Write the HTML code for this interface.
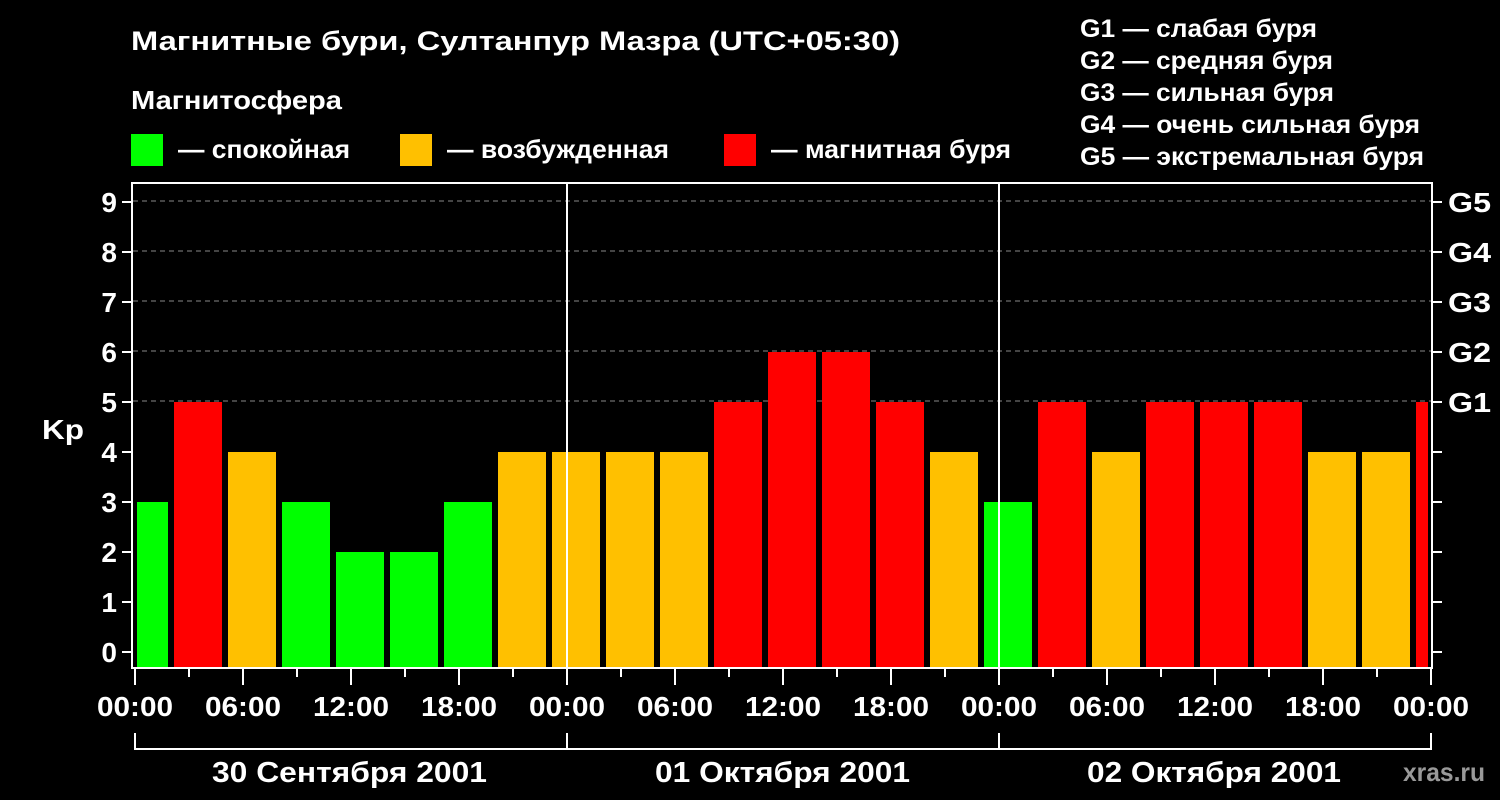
<!DOCTYPE html><html><head><meta charset="utf-8"><style>body{margin:0;background:#000;}svg{display:block}text{font-family:"Liberation Sans",Arial,sans-serif;font-weight:bold;fill:#fff}</style></head><body>
<svg width="1500" height="800" xmlns="http://www.w3.org/2000/svg">
<rect width="1500" height="800" fill="#000"/>
<text x="131" y="50" font-size="27" textLength="769" lengthAdjust="spacingAndGlyphs">Магнитные бури, Султанпур Мазра (UTC+05:30)</text>
<text x="131" y="109" font-size="26" textLength="211" lengthAdjust="spacingAndGlyphs">Магнитосфера</text>
<rect x="131" y="134" width="32" height="32" fill="#00ff00"/><text x="178" y="158" font-size="26" textLength="172" lengthAdjust="spacingAndGlyphs">— спокойная</text>
<rect x="400" y="134" width="32" height="32" fill="#ffc000"/><text x="447" y="158" font-size="26" textLength="222" lengthAdjust="spacingAndGlyphs">— возбужденная</text>
<rect x="724" y="134" width="32" height="32" fill="#ff0000"/><text x="771" y="158" font-size="26" textLength="240" lengthAdjust="spacingAndGlyphs">— магнитная буря</text>
<g font-size="25" lengthAdjust="spacingAndGlyphs"><text x="1080" y="37" textLength="237" lengthAdjust="spacingAndGlyphs">G1 — слабая буря</text><text x="1080" y="69" textLength="253" lengthAdjust="spacingAndGlyphs">G2 — средняя буря</text><text x="1080" y="101" textLength="254" lengthAdjust="spacingAndGlyphs">G3 — сильная буря</text><text x="1080" y="133" textLength="340" lengthAdjust="spacingAndGlyphs">G4 — очень сильная буря</text><text x="1080" y="165" textLength="344" lengthAdjust="spacingAndGlyphs">G5 — экстремальная буря</text></g>
<g stroke="#888" stroke-dasharray="5,4" stroke-width="1">
<line x1="133" y1="201" x2="1432" y2="201"/><line x1="133" y1="251" x2="1432" y2="251"/><line x1="133" y1="301" x2="1432" y2="301"/><line x1="133" y1="351" x2="1432" y2="351"/><line x1="133" y1="401" x2="1432" y2="401"/></g>
<g>
<rect x="137" y="502" width="31" height="166" fill="#00ff00"/>
<rect x="174" y="402" width="48" height="266" fill="#ff0000"/>
<rect x="228" y="452" width="48" height="216" fill="#ffc000"/>
<rect x="282" y="502" width="48" height="166" fill="#00ff00"/>
<rect x="336" y="552" width="48" height="116" fill="#00ff00"/>
<rect x="390" y="552" width="48" height="116" fill="#00ff00"/>
<rect x="444" y="502" width="48" height="166" fill="#00ff00"/>
<rect x="498" y="452" width="48" height="216" fill="#ffc000"/>
<rect x="552" y="452" width="48" height="216" fill="#ffc000"/>
<rect x="606" y="452" width="48" height="216" fill="#ffc000"/>
<rect x="660" y="452" width="48" height="216" fill="#ffc000"/>
<rect x="714" y="402" width="48" height="266" fill="#ff0000"/>
<rect x="768" y="352" width="48" height="316" fill="#ff0000"/>
<rect x="822" y="352" width="48" height="316" fill="#ff0000"/>
<rect x="876" y="402" width="48" height="266" fill="#ff0000"/>
<rect x="930" y="452" width="48" height="216" fill="#ffc000"/>
<rect x="984" y="502" width="48" height="166" fill="#00ff00"/>
<rect x="1038" y="402" width="48" height="266" fill="#ff0000"/>
<rect x="1092" y="452" width="48" height="216" fill="#ffc000"/>
<rect x="1146" y="402" width="48" height="266" fill="#ff0000"/>
<rect x="1200" y="402" width="48" height="266" fill="#ff0000"/>
<rect x="1254" y="402" width="48" height="266" fill="#ff0000"/>
<rect x="1308" y="452" width="48" height="216" fill="#ffc000"/>
<rect x="1362" y="452" width="48" height="216" fill="#ffc000"/>
<rect x="1416" y="402" width="12" height="266" fill="#ff0000"/>
</g>
<g stroke="#fff" stroke-width="2" fill="none">
<path d="M132 183 V668 H1432 V183 Z"/>
<line x1="567" y1="183" x2="567" y2="668"/><line x1="999" y1="183" x2="999" y2="668"/>
<path d="M122 652h10M122 602h10M122 552h10M122 502h10M122 452h10M122 402h10M122 352h10M122 302h10M122 252h10M122 202h10"/>
<path d="M1432 652h10M1432 602h10M1432 552h10M1432 502h10M1432 452h10M1432 402h10M1432 352h10M1432 302h10M1432 252h10M1432 202h10"/>
<path d="M135 668v17M243 668v17M351 668v17M459 668v17M567 668v17M675 668v17M783 668v17M891 668v17M999 668v17M1107 668v17M1215 668v17M1323 668v17M1431 668v17"/>
<path d="M189 668v9M297 668v9M405 668v9M513 668v9M621 668v9M729 668v9M837 668v9M945 668v9M1053 668v9M1161 668v9M1269 668v9M1377 668v9"/>
<path d="M135 733V749H1431V733M567 733v16M999 733v16"/>
</g>
<g font-size="28" text-anchor="end"><text x="117" y="662">0</text><text x="117" y="612">1</text><text x="117" y="562">2</text><text x="117" y="512">3</text><text x="117" y="462">4</text><text x="117" y="412">5</text><text x="117" y="362">6</text><text x="117" y="312">7</text><text x="117" y="262">8</text><text x="117" y="212">9</text></g>
<text x="42" y="439" font-size="28" textLength="42" lengthAdjust="spacingAndGlyphs">Kp</text>
<g font-size="28"><text x="1448" y="412" textLength="43" lengthAdjust="spacingAndGlyphs">G1</text><text x="1448" y="362" textLength="43" lengthAdjust="spacingAndGlyphs">G2</text><text x="1448" y="312" textLength="43" lengthAdjust="spacingAndGlyphs">G3</text><text x="1448" y="262" textLength="43" lengthAdjust="spacingAndGlyphs">G4</text><text x="1448" y="212" textLength="43" lengthAdjust="spacingAndGlyphs">G5</text></g>
<g font-size="28">
<text x="97" y="716" textLength="76" lengthAdjust="spacingAndGlyphs">00:00</text><text x="205" y="716" textLength="76" lengthAdjust="spacingAndGlyphs">06:00</text><text x="313" y="716" textLength="76" lengthAdjust="spacingAndGlyphs">12:00</text><text x="421" y="716" textLength="76" lengthAdjust="spacingAndGlyphs">18:00</text><text x="529" y="716" textLength="76" lengthAdjust="spacingAndGlyphs">00:00</text><text x="637" y="716" textLength="76" lengthAdjust="spacingAndGlyphs">06:00</text><text x="745" y="716" textLength="76" lengthAdjust="spacingAndGlyphs">12:00</text><text x="853" y="716" textLength="76" lengthAdjust="spacingAndGlyphs">18:00</text><text x="961" y="716" textLength="76" lengthAdjust="spacingAndGlyphs">00:00</text><text x="1069" y="716" textLength="76" lengthAdjust="spacingAndGlyphs">06:00</text><text x="1177" y="716" textLength="76" lengthAdjust="spacingAndGlyphs">12:00</text><text x="1285" y="716" textLength="76" lengthAdjust="spacingAndGlyphs">18:00</text><text x="1393" y="716" textLength="76" lengthAdjust="spacingAndGlyphs">00:00</text>
<text x="212" y="782" font-size="29" textLength="275" lengthAdjust="spacingAndGlyphs">30 Сентября 2001</text><text x="655" y="782" font-size="29" textLength="255" lengthAdjust="spacingAndGlyphs">01 Октября 2001</text><text x="1087" y="782" font-size="29" textLength="254" lengthAdjust="spacingAndGlyphs">02 Октября 2001</text></g>
<text x="1403" y="781" font-size="26" textLength="82" lengthAdjust="spacingAndGlyphs" style="fill:#999">xras.ru</text>
</svg></body></html>
